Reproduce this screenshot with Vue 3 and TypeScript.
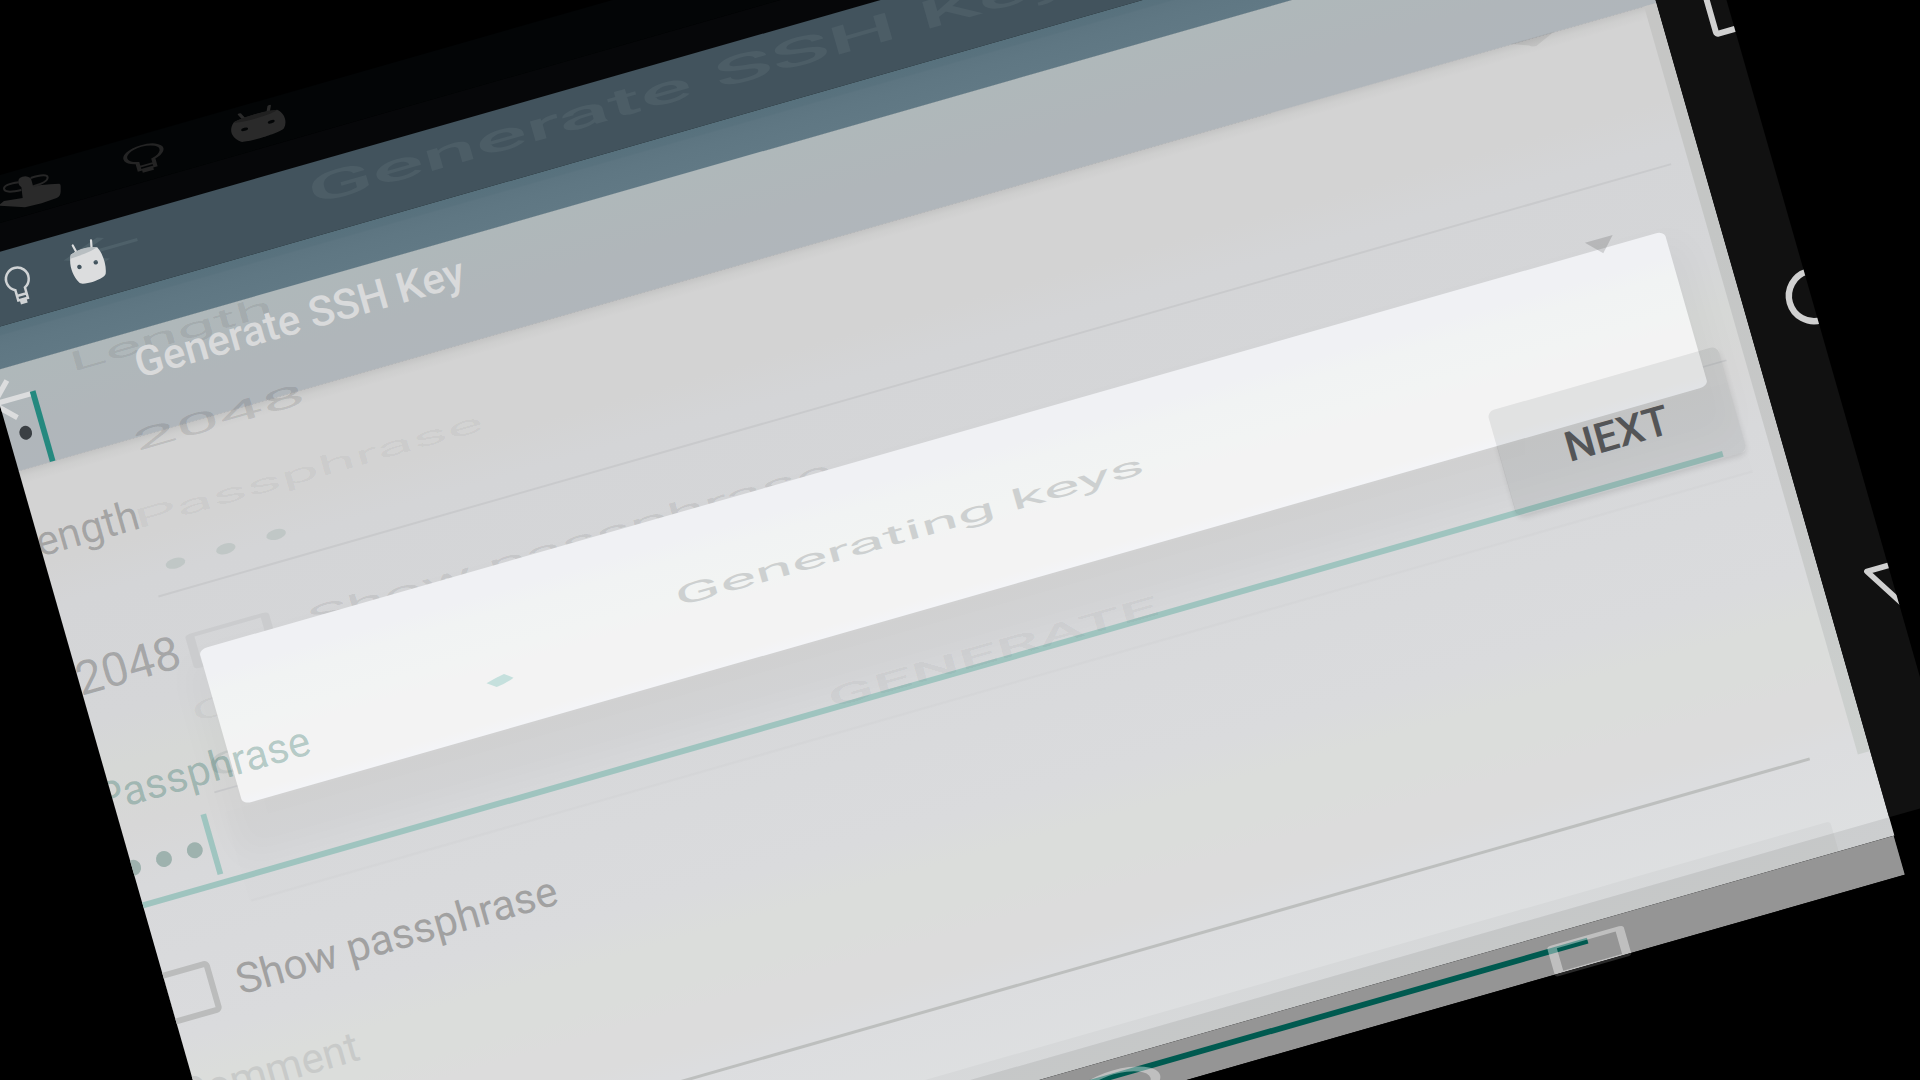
<script setup lang="ts">
interface Label {
  text: string
  x: number
  y: number
  size: number
  width: number
  fill: string
  weight?: number
}

// x is the left edge and width the full advance of the run, in the tilted frame
const ghostLabels: Label[] = [
  { text: 'Generate SSH Key', x: 243, y: 283, size: 39, width: 797, fill: '#4c5d66', weight: 500 },
  { text: 'Length', x: -33, y: 377.5, size: 27, width: 211, fill: 'rgba(0,0,0,.085)' },
  { text: '2048', x: 7, y: 471.5, size: 29, width: 178, fill: 'rgba(0,0,0,.105)' },
  { text: 'Passphrase', x: -14, y: 546.5, size: 27, width: 362, fill: 'rgba(0,0,0,.045)' },
  { text: 'Show passphrase', x: 126, y: 688.5, size: 27, width: 544, fill: 'rgba(0,0,0,.085)' },
  { text: 'Comment', x: -12, y: 748, size: 27, width: 290, fill: 'rgba(0,0,0,.045)' },
  { text: 'C', x: -12, y: 806, size: 31, width: 49, fill: 'rgba(0,40,35,.08)' },
]

const frontLabels: Label[] = [
  { text: 'Generate SSH Key', x: 30, y: 402, size: 42, width: 341, fill: '#d9dadb', weight: 500 },
  { text: 'Length', x: -137, y: 546.5, size: 42, width: 128.5, fill: 'rgba(0,0,0,.225)' },
  { text: '2048', x: -113.5, y: 691.5, size: 47, width: 107, fill: 'rgba(0,0,0,.225)' },
  { text: 'Passphrase', x: -126, y: 810.3, size: 42, width: 220, fill: 'rgba(0,85,70,.27)' },
  { text: 'Show passphrase', x: -42, y: 1022.7, size: 42, width: 332.5, fill: '#a1a1a1' },
  { text: 'Comment', x: -127, y: 1118, size: 42, width: 184, fill: '#c8cac9' },
]

const ghostDots: number[] = [14, 66.3, 118.7]
const frontDots: number[] = [-110.5, -78.4, -46.3]
</script>

<template>
  <main class="stage">
    <svg class="scene" viewBox="0 0 1920 1080" width="1920" height="1080">
      <defs>
        <linearGradient id="toolbar" x1="0" y1="355" x2="0" y2="458" gradientUnits="userSpaceOnUse">
          <stop offset="0" stop-color="#afb8ba" />
          <stop offset=".6" stop-color="#b0b6ba" />
          <stop offset="1" stop-color="#b0b6bb" />
        </linearGradient>
        <linearGradient id="page" x1="0" y1="458" x2="0" y2="1324" gradientUnits="userSpaceOnUse">
          <stop offset="0" stop-color="#d3d3d3" />
          <stop offset=".11" stop-color="#d3d3d3" />
          <stop offset=".16" stop-color="#d4d5d7" />
          <stop offset=".3" stop-color="#d5d6d8" />
          <stop offset=".36" stop-color="#d6d8d6" />
          <stop offset=".43" stop-color="#d7d7d7" />
          <stop offset=".5" stop-color="#d8d9db" />
          <stop offset=".68" stop-color="#dadbdd" />
          <stop offset=".73" stop-color="#dbdddb" />
          <stop offset=".78" stop-color="#dbdddb" />
          <stop offset=".81" stop-color="#dcdcdc" />
          <stop offset=".85" stop-color="#dcdcdc" />
          <stop offset=".88" stop-color="#dcdddf" />
          <stop offset="1" stop-color="#dee0e1" />
        </linearGradient>
        <linearGradient id="fade" x1="0" y1="0" x2="0" y2="1">
          <stop offset="0" stop-color="#000" stop-opacity="0.075" />
          <stop offset=".5" stop-color="#203020" stop-opacity="0.025" />
          <stop offset="1" stop-color="#000" stop-opacity="0" />
        </linearGradient>
        <linearGradient id="sheet" x1="0" y1="679" x2="0" y2="840" gradientUnits="userSpaceOnUse">
          <stop offset="0" stop-color="#f0f1f4" />
          <stop offset=".16" stop-color="#f0f1f4" />
          <stop offset=".28" stop-color="#f1f3f3" />
          <stop offset=".52" stop-color="#f2f4f3" />
          <stop offset=".62" stop-color="#f3f3f3" />
          <stop offset=".93" stop-color="#f3f3f3" />
          <stop offset="1" stop-color="#f3f4f7" />
        </linearGradient>
        <linearGradient id="edge" x1="0" y1="458" x2="0" y2="1236" gradientUnits="userSpaceOnUse">
          <stop offset="0" stop-color="#c6c6c5" />
          <stop offset=".3" stop-color="#c4c6c5" />
          <stop offset=".6" stop-color="#c7c8c8" />
          <stop offset="1" stop-color="#ccd0ce" />
        </linearGradient>
        <linearGradient id="stripe" x1="0" y1="314" x2="0" y2="355" gradientUnits="userSpaceOnUse">
          <stop offset="0" stop-color="#57717d" />
          <stop offset=".19" stop-color="#59727e" />
          <stop offset=".23" stop-color="#5d7581" />
          <stop offset=".5" stop-color="#5f7783" />
          <stop offset="1" stop-color="#617985" />
        </linearGradient>
        <filter id="soft" x="-10%" y="-30%" width="120%" height="160%">
          <feGaussianBlur stdDeviation="16" />
        </filter>
        <filter id="tight" x="-10%" y="-20%" width="120%" height="140%">
          <feGaussianBlur stdDeviation="3" />
        </filter>
        <clipPath id="frame"><rect x="-111.4" y="160" width="1703" height="1204.5" /></clipPath>
        <clipPath id="rail"><rect x="1592" y="0" width="68" height="1305" /></clipPath>
        <clipPath id="below"><rect x="-111.4" y="1364.5" width="1900" height="60" /></clipPath>
        <clipPath id="under">
          <path d="M1290 840.5H1317V907Q1317 914 1324 914H1549Q1556 914 1556 907V800H1580V950H1290Z" />
        </clipPath>
        <symbol id="robot" viewBox="-30 -30 60 60" width="60" height="60" overflow="visible">
          <path d="M-9-22.5-7.3-15M10-22.5 8.4-15" fill="none" stroke="currentColor" stroke-width="2.2" stroke-linecap="round" />
          <path
            fill="currentColor"
            fill-rule="evenodd"
            d="M-13.5-14Q0-19 14-14C18-6 18 6 15 13.5 14 17 3 18 0 18-4 18-12 17.5-13 15-18 6-18-6-13.5-14ZM-10.7 0A2.2 2.2 0 1 0-6.3 0 2.2 2.2 0 1 0-10.7 0M6.3 0A2.2 2.2 0 1 0 10.7 0 2.2 2.2 0 1 0 6.3 0"
          />
        </symbol>
        <symbol id="bulb" viewBox="-30 -30 60 60" width="60" height="60" overflow="visible">
          <path d="M-5 15V10.2A11.4 11.4 0 1 1 5 10.2V21H-5V14M-5 16.2H5" fill="none" stroke="currentColor" stroke-width="2.5" />
          <path d="M-3.5 21h7v4.5h-7z" fill="currentColor" />
        </symbol>
        <symbol id="back" viewBox="0 0 24 24" width="24" height="24" overflow="visible">
          <path fill="currentColor" d="M20 11H7.83l5.59-5.59L12 4l-8 8 8 8 1.41-1.41L7.83 13H20z" />
        </symbol>
      </defs>

      <rect width="1920" height="1080" fill="#000" />

      <g transform="rotate(-15.95)">
        <!-- status bars -->
        <rect x="-111.4" y="168.3" width="1771" height="46.2" fill="#030506" />
        <rect x="-111.4" y="214.5" width="1771" height="28" fill="#060709" />
        <rect x="-111.4" y="242" width="1703" height="72" fill="#42535d" />
        <rect x="-111.4" y="314" width="1703" height="41.5" fill="url(#stripe)" />

        <!-- page -->
        <rect x="-111.4" y="355" width="1703.2" height="103.5" fill="url(#toolbar)" />
        <rect x="-111.4" y="458" width="1703.2" height="866" fill="url(#page)" />

        <g clip-path="url(#frame)">
          <rect x="-5" y="690" width="1559" height="205" rx="10" fill="#000" opacity=".018" filter="url(#soft)" />
          <rect x="-111.4" y="458" width="1703.2" height="14" fill="url(#fade)" />
          <rect x="1579" y="458" width="13" height="778" fill="url(#edge)" />
          <path d="M-8 842H1556V936H-8Z" fill="#000" opacity=".005" />
          <path d="M-6 935H1556" stroke="#000" stroke-opacity=".012" stroke-width="3" />
          <rect x="-200" y="1292.5" width="1734" height="32" rx="4" fill="#000" fill-opacity=".028" />
          <rect x="-111.4" y="1305" width="1703.2" height="19.5" fill="#000" fill-opacity=".08" />
          <rect x="-111.4" y="1324" width="1702.5" height="40.5" fill="#959595" />
          <rect x="-111.4" y="1337.8" width="1379.4" height="5.8" fill="#005a50" />

          <!-- squashed copy of the form -->
          <g color="#4e6069" transform="translate(-29.7 248.6) scale(4.8 1.62)"><use href="#back" /></g>
          <text
            v-for="(l, i) in ghostLabels"
            :key="'g' + i"
            :x="l.x"
            :y="l.y"
            :font-size="l.size"
            :textLength="l.width"
            :font-weight="l.weight ?? 400"
            :fill="l.fill"
            lengthAdjust="spacingAndGlyphs"
          >{{ l.text }}</text>
          <ellipse v-for="d in ghostDots" :key="'gd' + d" :cx="d" cy="589.7" rx="10" ry="5.2" fill="#c0c7c6" />
          <path d="M-11.6 617H1561.7" stroke="#c9cacc" stroke-width="2" />
          <path d="M-11.6 820.8H1561" stroke="#c6c7c9" stroke-width="1.6" />
          <path
            d="M10 661.5H83Q90 661.5 90 664.5V694Q90 697 83 697H10Q3 697 3 694V664.5Q3 661.5 10 661.5ZM12 665.5V693H81V665.5Z"
            fill="#cbccce"
            fill-rule="evenodd"
          />
        </g>

        <!-- dialog -->
        <rect x="12.5" y="679.3" width="1524" height="161" rx="9" ry="5.5" fill="url(#sheet)" />
        <text x="485" y="769.6" font-size="27.5" textLength="487" lengthAdjust="spacingAndGlyphs" fill="#cdd0d0">Generating keys</text>

        <g clip-path="url(#frame)">
          <rect x="-111.4" y="906.8" width="1643.2" height="6" fill="#9fc4bf" />
          <text x="604" y="909.2" font-size="27.5" font-weight="500" textLength="343" lengthAdjust="spacingAndGlyphs" fill="rgba(0,0,0,.05)">GENERATE</text>

          <!-- cursor, bullets and lines of the full-size form -->
          <g color="#dcddde" transform="translate(-131.6 355.2) scale(2.65)"><use href="#back" /></g>
          <rect x="-79" y="385" width="5.8" height="73" fill="#25897f" />
          <ellipse cx="-94.2" cy="423.2" rx="6.3" ry="7" fill="#3a3f43" />
          <circle v-for="d in frontDots" :key="'fd' + d" :cx="d" cy="871" r="8" fill="#9eb2ae" />
          <rect x="-31.2" y="838.7" width="5.8" height="62.5" fill="#9fc5c0" />
          <rect x="-114.5" y="983" width="48" height="47.5" rx="2.5" fill="none" stroke="#bbbcbc" stroke-width="6" />
          <path d="M-111.4 1227H1531.5" stroke="#bdbfbe" stroke-width="3" />
          <text
            v-for="(l, i) in frontLabels"
            :key="'f' + i"
            :x="l.x"
            :y="l.y"
            :font-size="l.size"
            :textLength="l.width"
            :font-weight="l.weight ?? 400"
            :fill="l.fill"
            lengthAdjust="spacingAndGlyphs"
          >{{ l.text }}</text>
        </g>

        <!-- next button -->
        <g clip-path="url(#under)">
          <rect x="1318" y="808" width="237" height="108" rx="7" fill="#000" opacity=".13" filter="url(#tight)" />
        </g>
        <rect x="1316.5" y="804.5" width="239.5" height="109.5" rx="7" fill="#000814" fill-opacity=".07" />
        <text x="1382" y="875.5" font-size="41.5" font-weight="500" textLength="107" lengthAdjust="spacingAndGlyphs" fill="#545557">NEXT</text>

        <!-- side navigation -->
        <rect x="1591.8" y="-20" width="68.2" height="1325" fill="#111" />
        <g clip-path="url(#rail)" fill="none" stroke="#d0d0d0">
          <rect x="1641" y="456" width="48" height="48.5" rx="2" stroke-width="6" />
          <circle cx="1663" cy="783" r="25.3" stroke-width="6.4" />
          <path d="M1638 1062.5H1690L1664 1104.5Z" stroke-width="5.6" stroke-linejoin="round" />
        </g>

        <!-- bottom navigation -->
        <path
          clip-path="url(#frame)"
          d="M1231 1335.5H1302Q1306.5 1335.5 1306.5 1338V1364Q1306.5 1367 1302 1367H1231Q1227 1367 1227 1364V1338Q1227 1335.5 1231 1335.5ZM1236.3 1339.5V1363H1297.5V1339.5Z"
          fill="rgba(255,255,255,.4)"
          fill-rule="evenodd"
        />
        <path clip-path="url(#below)" d="M1227 1340H1306.5V1364.5Q1306 1367 1302 1367H1231Q1227 1367 1227 1364.5Z" fill="#292929" />
        <path
          clip-path="url(#frame)"
          d="M731 1352.500A44.500 17.500 0 1 1 820 1352.500 44.500 17.500 0 1 1 731 1352.500M741 1352.500A34.500 13.500 0 1 0 810 1352.500 34.500 13.500 0 1 0 741 1352.500"
          fill="rgba(255,255,255,.4)"
          fill-rule="evenodd"
        />

        <!-- status icons -->
        <g color="#2a2a2a" transform="translate(213.5 191.6) scale(1.63 .71)">
          <use href="#robot" x="-30" y="-30" />
          <ellipse cy="-13.5" rx="13.5" ry="3" fill="#202020" />
        </g>
        <g color="#242424" transform="translate(95.6 187.3) scale(1.65 .71)"><use href="#bulb" x="-30" y="-30" /></g>
        <g color="#dcddde" transform="translate(11.5 278.5)">
          <use href="#robot" x="-30" y="-30" />
          <path d="M-13.5-14Q0-19.5 14-14 6-11.5 0-11.2-8-10.5-15-10.5Z" fill="#b8bec1" />
        </g>
        <g color="#d0d3d5" transform="translate(-60 273)"><use href="#bulb" x="-30" y="-30" /></g>
      </g>

      <!-- touch icon -->
      <g transform="translate(0 95) scale(.33333)">
        <path d="M0 328 12 318 68 309 64 276Q54 270 55 258 56 246 76 244 92 246 94 254L99 272Q125 270 150 268L178 266Q183 268 182 274V290Q181 304 170 309L125 325 75 337 0 332Z" fill="#2a2a2a" />
        <g fill="none" stroke="#262626" stroke-width="6">
          <path d="M64 285Q12 297 12 280 13 268 56 262" />
          <path d="M92 249Q141 234 143 247 144 261 100 274" />
        </g>
      </g>

      <!-- dropdown arrows -->
      <path d="M1510.6 44 1554.3 31.5 1536.3 46Q1532 47 1529 45.5Z" fill="#000" fill-opacity=".065" />
      <path d="M1584.9 242.7 1612.7 235 1603.3 253.3Z" fill="#000" fill-opacity=".14" />

      <!-- spinner -->
      <path d="M486.5 683.3Q495 678 504 674L513.5 677.7Q507 683 496.7 687Z" fill="#c5e0dd" />
    </svg>
  </main>
</template>

<style scoped>
.stage {
  width: 1920px;
  height: 1080px;
  overflow: hidden;
  background: #000;
}

.scene {
  display: block;
  font-family: Roboto, 'Liberation Sans', sans-serif;
}
</style>

<style>
body {
  background: #000;
  overflow: hidden;
}
</style>
